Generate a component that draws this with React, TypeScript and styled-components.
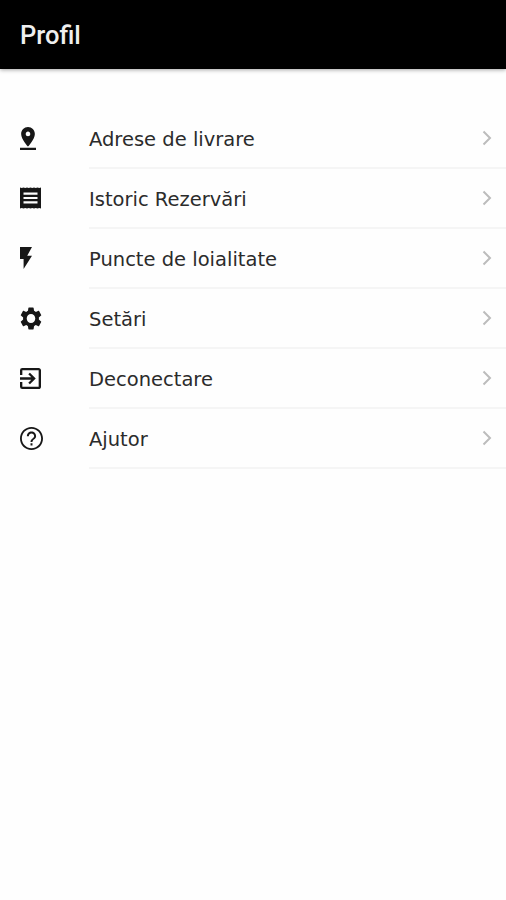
import React from "react";
import styled, { createGlobalStyle } from "styled-components";

const GlobalStyle = createGlobalStyle`
  body { margin: 0; background: #fefefe; }
  *, *::before, *::after { box-sizing: border-box; }
`;

const Screen = styled.main`
  min-height: 900px;
  background: #fefefe;
  color: #2b2b2b;
`;

const Header = styled.header`
  display: flex;
  align-items: center;
  height: 69px;
  padding: 0 20px;
  background: #000;
  box-shadow: 0 1px 4px rgba(0, 0, 0, 0.35);
`;

const Title = styled.h1`
  margin: 0;
  font: 500 25.5px/32px Roboto, sans-serif;
  color: #efefef;
`;

const Menu = styled.nav`
  display: flex;
  flex-direction: column;
  padding-top: 40px;
`;

const Row = styled.a`
  display: flex;
  height: 60px;
`;

const IconCell = styled.span`
  display: flex;
  align-items: center;
  flex: 0 0 89px;
  padding: 0 0 2px 20px;
  color: #171717;
`;

const RowBody = styled.span`
  display: flex;
  align-items: center;
  justify-content: space-between;
  flex: 1;
  padding-right: 14px;
  border-bottom: 2px solid #f5f5f5;
`;

const Label = styled.span`
  padding-top: 4px;
  white-space: nowrap;
  font: 400 19.5px/28px "DejaVu Sans", sans-serif;
`;

const Chevron = () => (
  <svg width="10" height="16" viewBox="0 0 10 16" fill="none" stroke="#bcbcbc" strokeWidth="2">
    <path d="M1.500 1.500 8 8l-6.500 6.500" />
  </svg>
);

type Glyph = { box: string; width: number; height: number; path: string };

const glyphs: Record<string, Glyph> = {
  pin: {
    box: "5 2 14 20", width: 16, height: 23,
    path: "M18 8c0-3.310-2.690-6-6-6S6 4.690 6 8c0 4.500 6 11 6 11s6-6.500 6-11zm-8 0c0-1.100.9-2 2-2s2 .9 2 2-.89 2-2 2c-1.100 0-2-.9-2-2zM5 20v2h14v-2H5z",
  },
  receipt: {
    box: "3 2 18 20", width: 21, height: 22,
    path: "M18 17H6v-2h12v2zm0-4H6v-2h12v2zm0-4H6V7h12v2zM3 21.500l1.500-.5 1.500.5 1.500-.5 1.500.5 1.500-.5 1.500.5 1.500-.5 1.500.5 1.500-.5 1.500.5 1.500-.5 1.500.5v-19l-1.500.5-1.500-.5-1.500.5-1.500-.5-1.500.5-1.500-.5-1.500.5-1.500-.5-1.500.5-1.500-.5-1.500.5-1.500-.5z",
  },
  bolt: { box: "7 2 10 20", width: 12, height: 22, path: "M7 2v11h3v9l7-12h-4l4-8z" },
  gear: {
    box: "2 2 20 20", width: 22, height: 23,
    path: "M19.140 12.940c.04-.3.06-.61.06-.94 0-.32-.02-.64-.07-.94l2.030-1.580a.49.49 0 0 0 .12-.61l-1.920-3.320a.488.488 0 0 0-.59-.22l-2.390.96c-.5-.38-1.030-.7-1.620-.94l-.36-2.540a.484.484 0 0 0-.48-.41h-3.840c-.24 0-.43.17-.47.41l-.36 2.540c-.59.24-1.130.57-1.620.94l-2.390-.96c-.22-.08-.47 0-.59.22L2.740 8.870c-.12.21-.08.47.12.61l2.030 1.580c-.05.3-.09.63-.09.94s.02.64.07.94l-2.030 1.580a.49.49 0 0 0-.12.61l1.920 3.320c.12.22.37.29.59.22l2.390-.96c.5.38 1.030.7 1.620.94l.36 2.540c.05.24.24.41.48.41h3.840c.24 0 .44-.17.47-.41l.36-2.540c.59-.24 1.130-.56 1.620-.94l2.390.96c.22.08.47 0 .59-.22l1.920-3.320c.12-.22.07-.47-.12-.61l-2.010-1.580zM12 15.900c-2.150 0-3.900-1.750-3.900-3.900s1.750-3.900 3.900-3.900 3.900 1.750 3.900 3.900-1.750 3.900-3.900 3.900z",
  },
  exit: {
    box: "3 3 18 18", width: 21, height: 21,
    path: "M10.090 15.590 11.500 17l5-5-5-5-1.410 1.410L12.670 11H3v2h9.670l-2.580 2.590zM19 3H5a2 2 0 0 0-2 2v4h2V5h14v14H5v-4H3v4a2 2 0 0 0 2 2h14c1.100 0 2-.9 2-2V5c0-1.100-.9-2-2-2z",
  },
  help: {
    box: "2 2 20 20", width: 23, height: 23,
    path: "M11.150 18h1.700v-1.800h-1.700V18zm.85-16C6.480 2 2 6.480 2 12s4.480 10 10 10 10-4.480 10-10S17.520 2 12 2zm0 18.400c-4.640 0-8.400-3.760-8.400-8.400S7.360 3.600 12 3.600s8.400 3.760 8.400 8.400-3.760 8.400-8.400 8.400zM12 6c-2.210 0-4 1.790-4 4h1.700c0-1.270 1.030-2.300 2.300-2.300s2.300 1.030 2.300 2.300c0 2-3.150 1.850-3.150 5h1.700c0-2.250 3.150-2.500 3.150-5 0-2.210-1.790-4-4-4z",
  },
};

const MenuIcon = ({ box, width, height, path }: Glyph) => (
  <svg width={width} height={height} viewBox={box} preserveAspectRatio="none" fill="currentColor">
    <path d={path} />
  </svg>
);

const items = [
  { label: "Adrese de livrare", icon: glyphs.pin },
  { label: "Istoric Rezervări", icon: glyphs.receipt },
  { label: "Puncte de loialitate", icon: glyphs.bolt },
  { label: "Setări", icon: glyphs.gear },
  { label: "Deconectare", icon: glyphs.exit },
  { label: "Ajutor", icon: glyphs.help },
];

export default function App() {
  return (
    <Screen>
      <GlobalStyle />
      <Header><Title>Profil</Title></Header>
      <Menu>
        {items.map(({ label, icon }) => (
          <Row key={label}>
            <IconCell><MenuIcon {...icon} /></IconCell>
            <RowBody><Label>{label}</Label><Chevron /></RowBody>
          </Row>
        ))}
      </Menu>
    </Screen>
  );
}
